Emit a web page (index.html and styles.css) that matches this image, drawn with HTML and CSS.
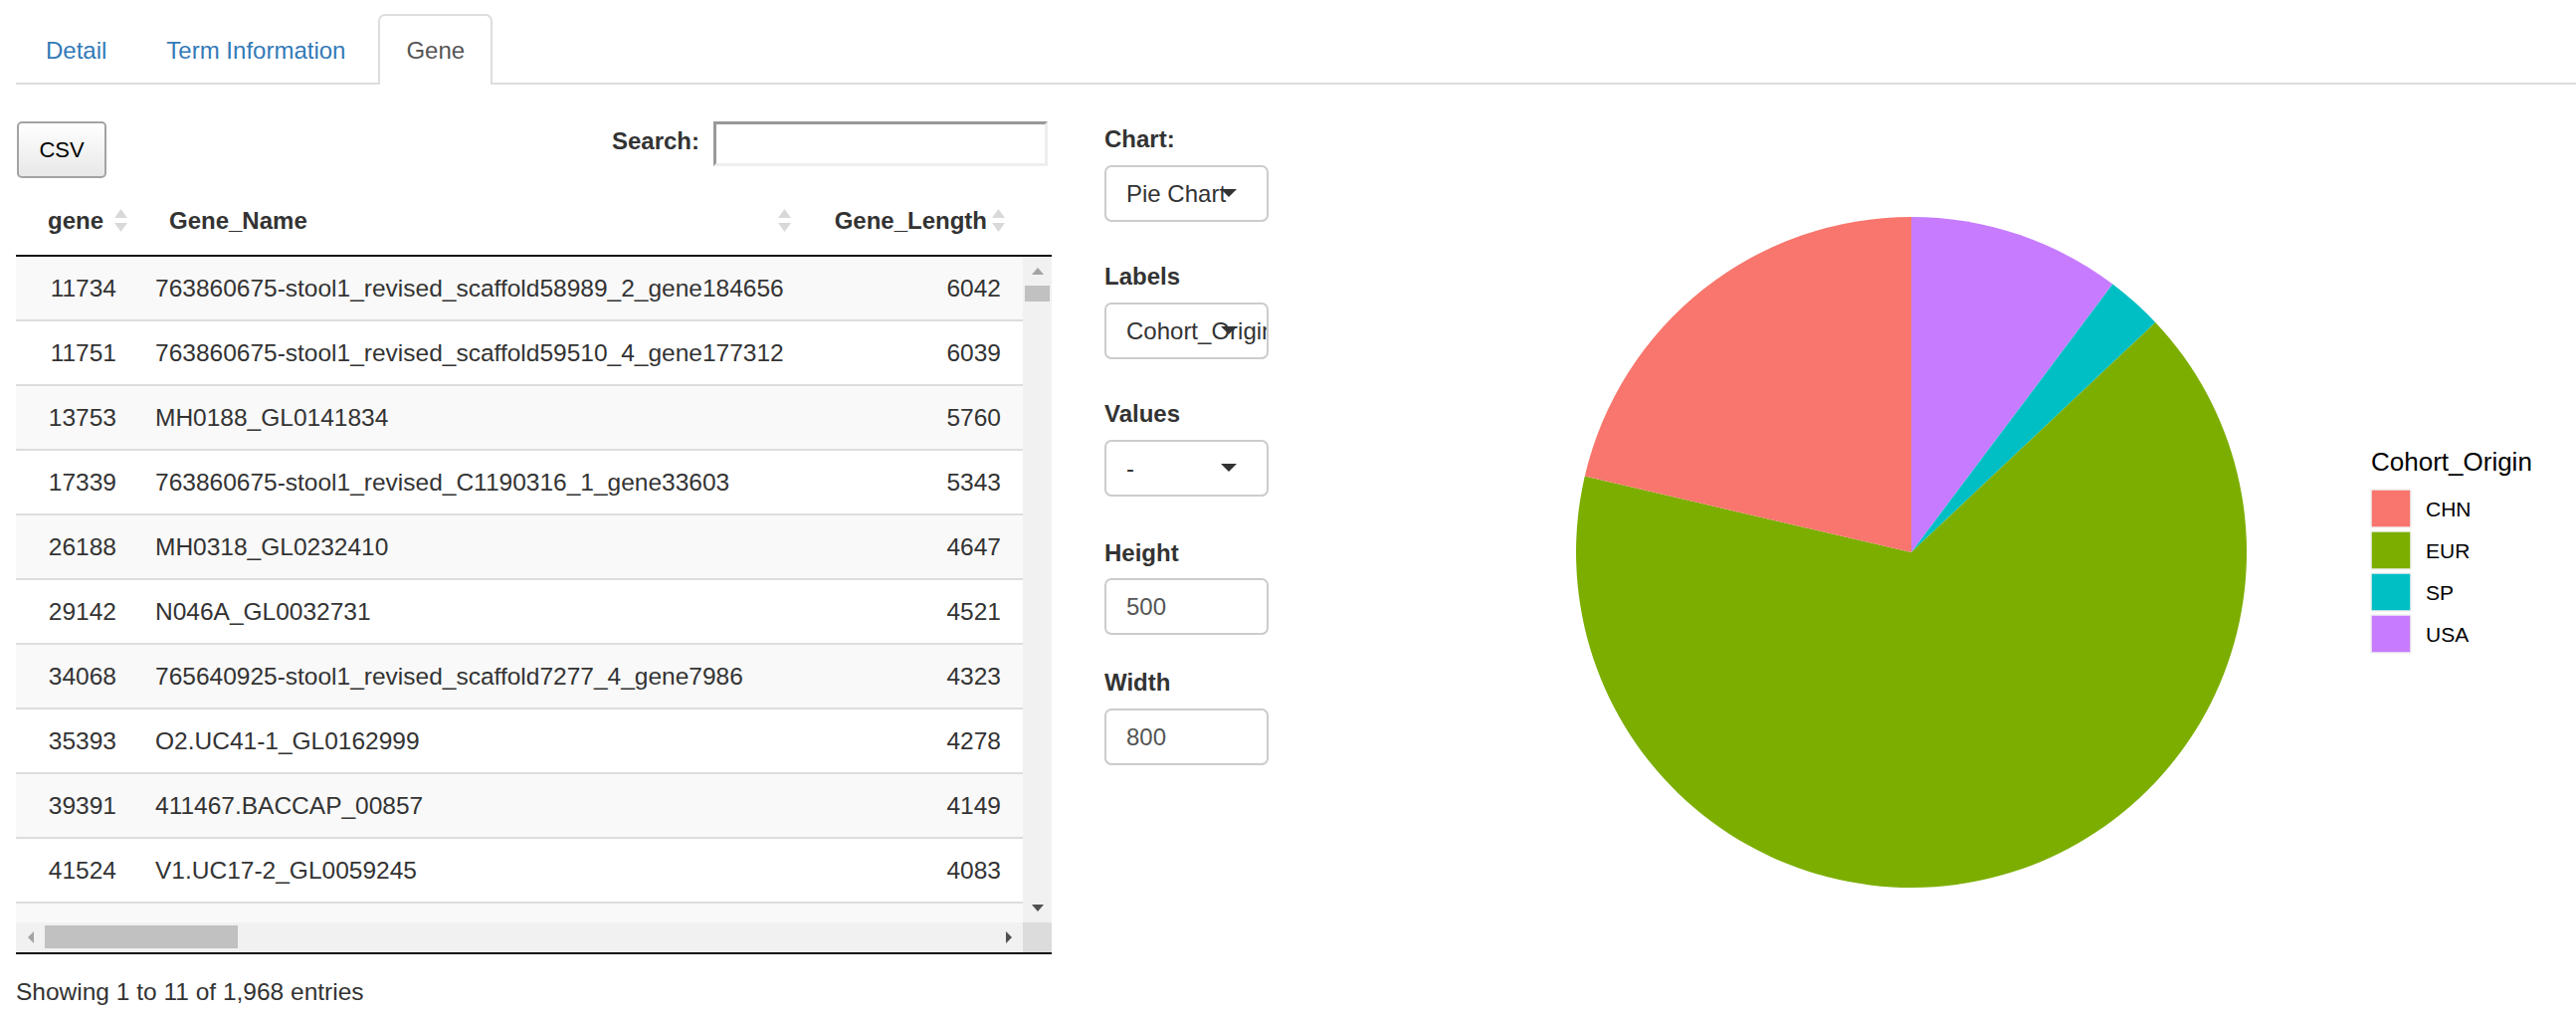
FILE: index.html
```html
<!DOCTYPE html>
<html lang="en">
<head>
<meta charset="utf-8">
<title>Gene</title>
<link rel="stylesheet" href="styles.css">
</head>
<body>
<ul class="tabs">
  <li class="tab"><a>Detail</a></li>
  <li class="tab"><a>Term Information</a></li>
  <li class="tab active"><a>Gene</a></li>
</ul>
<div class="content">
  <div class="table-panel">
    <div class="toolbar">
      <button class="btn-csv">CSV</button>
      <label class="search"><span class="search-label">Search:</span><input class="search-input" type="search"></label>
    </div>
    <div class="thead">
      <div class="th th-gene">gene<svg class="sort" viewBox="0 0 13 23"><polygon points="0,9 6.5,0 13,9"/><polygon points="0,14 13,14 6.5,23"/></svg></div>
      <div class="th th-name">Gene_Name<svg class="sort" viewBox="0 0 13 23"><polygon points="0,9 6.5,0 13,9"/><polygon points="0,14 13,14 6.5,23"/></svg></div>
      <div class="th th-len">Gene_Length<svg class="sort" viewBox="0 0 13 23"><polygon points="0,9 6.5,0 13,9"/><polygon points="0,14 13,14 6.5,23"/></svg></div>
    </div>
    <div class="tbody-wrap">
      <div class="rows">
        <div class="row"><span class="c1">11734</span><span class="c2">763860675-stool1_revised_scaffold58989_2_gene184656</span><span class="c3">6042</span></div>
        <div class="row"><span class="c1">11751</span><span class="c2">763860675-stool1_revised_scaffold59510_4_gene177312</span><span class="c3">6039</span></div>
        <div class="row"><span class="c1">13753</span><span class="c2">MH0188_GL0141834</span><span class="c3">5760</span></div>
        <div class="row"><span class="c1">17339</span><span class="c2">763860675-stool1_revised_C1190316_1_gene33603</span><span class="c3">5343</span></div>
        <div class="row"><span class="c1">26188</span><span class="c2">MH0318_GL0232410</span><span class="c3">4647</span></div>
        <div class="row"><span class="c1">29142</span><span class="c2">N046A_GL0032731</span><span class="c3">4521</span></div>
        <div class="row"><span class="c1">34068</span><span class="c2">765640925-stool1_revised_scaffold7277_4_gene7986</span><span class="c3">4323</span></div>
        <div class="row"><span class="c1">35393</span><span class="c2">O2.UC41-1_GL0162999</span><span class="c3">4278</span></div>
        <div class="row"><span class="c1">39391</span><span class="c2">411467.BACCAP_00857</span><span class="c3">4149</span></div>
        <div class="row"><span class="c1">41524</span><span class="c2">V1.UC17-2_GL0059245</span><span class="c3">4083</span></div>
        <div class="row stub"></div>
      </div>
      <div class="vscroll">
        <div class="sb-btn"><i class="tri-up"></i></div>
        <div class="vthumb"></div>
        <div class="sb-fill"></div>
        <div class="sb-btn"><i class="tri-down"></i></div>
      </div>
      <div class="hscroll">
        <div class="sb-btn-h"><i class="tri-left"></i></div>
        <div class="hthumb"></div>
        <div class="sb-fill"></div>
        <div class="sb-btn-h"><i class="tri-right"></i></div>
      </div>
      <div class="corner"></div>
    </div>
    <div class="info">Showing 1 to 11 of 1,968 entries</div>
  </div>

  <div class="controls">
    <div class="group g-chart">
      <label class="ctl-label">Chart:</label>
      <div class="select"><span>Pie Chart</span><i class="caret"></i></div>
    </div>
    <div class="group g-labels">
      <label class="ctl-label">Labels</label>
      <div class="select"><span>Cohort_Origin</span><i class="caret"></i></div>
    </div>
    <div class="group g-values">
      <label class="ctl-label">Values</label>
      <div class="select"><span>-</span><i class="caret"></i></div>
    </div>
    <div class="group g-height">
      <label class="ctl-label lbl-num">Height</label>
      <div class="num">500</div>
    </div>
    <div class="group g-width">
      <label class="ctl-label">Width</label>
      <div class="num">800</div>
    </div>
  </div>

  <div class="plot">
    <svg class="pie" width="1273" height="900" viewBox="0 0 1273 900">
      <path d="M621,470 L621,133 A337,337 0 0 1 823.3,200.5 Z" fill="#C77CFF"/>
      <path d="M621,470 L823.3,200.5 A337,337 0 0 1 866.3,238.9 Z" fill="#00BFC4"/>
      <path d="M621,470 L866.3,238.9 A337,337 0 1 1 292.8,393.6 Z" fill="#7CAE00"/>
      <path d="M621,470 L292.8,393.6 A337,337 0 0 1 621,133 Z" fill="#F8766D"/>
      <text class="legend-title" x="1083" y="388">Cohort_Origin</text>
      <rect x="1083" y="407" width="40" height="38" fill="#F8766D" stroke="#f2f2f2" stroke-width="1.5"/>
      <rect x="1083" y="449" width="40" height="38" fill="#7CAE00" stroke="#f2f2f2" stroke-width="1.5"/>
      <rect x="1083" y="491" width="40" height="38" fill="#00BFC4" stroke="#f2f2f2" stroke-width="1.5"/>
      <rect x="1083" y="533" width="40" height="38" fill="#C77CFF" stroke="#f2f2f2" stroke-width="1.5"/>
      <text class="legend-label" x="1138" y="434">CHN</text>
      <text class="legend-label" x="1138" y="476">EUR</text>
      <text class="legend-label" x="1138" y="518">SP</text>
      <text class="legend-label" x="1138" y="560">USA</text>
    </svg>
  </div>
</div>
</body>
</html>
```

FILE: styles.css
```css
html, body {
  margin: 0;
  background: #fff;
}
body {
  padding: 0 0 0 16px;
  font-family: "Liberation Sans", Arial, Helvetica, sans-serif;
  font-size: 24.5px;
  line-height: 34px;
  color: #333;
  overflow: hidden;
}

/* Tabs */
.tabs {
  list-style: none;
  margin: 14px 0 0 0;
  padding: 0;
  display: flex;
  border-bottom: 2px solid #ddd;
  font-size: 24px;
}
.tab {
  height: 71px;
  box-sizing: border-box;
  border: 2px solid transparent;
  border-bottom: 0;
  margin-bottom: -2px;
  padding: 0 28px;
  display: flex;
  align-items: center;
  border-radius: 7px 7px 0 0;
  color: #337ab7;
}
.tab.active {
  border-color: #ddd;
  background: #fff;
  color: #555;
  padding: 0 26px;
  margin-left: 3px;
}

/* Layout */
.content {
  display: flex;
  align-items: flex-start;
}
.table-panel {
  width: 1041px;
  padding-top: 37px;
  flex: none;
}

/* Toolbar */
.toolbar {
  display: flex;
  justify-content: space-between;
  align-items: flex-start;
  height: 57px;
}
.btn-csv {
  width: 90px;
  height: 57px;
  margin-left: 1px;
  padding: 0;
  font-family: "Liberation Sans", Arial, sans-serif;
  font-size: 22px;
  color: #000;
  border: 2px solid #a3a3a3;
  border-radius: 5px;
  background: linear-gradient(#ffffff, #e8e8e8);
}
.search {
  display: flex;
  align-items: flex-start;
  margin-right: 4px;
  font-weight: bold;
  font-size: 24px;
}
.search-label {
  margin-top: 3px;
}
.search-input {
  width: 336px;
  height: 45px;
  box-sizing: border-box;
  margin: 0 0 0 14px;
  border-top: 3px solid #999;
  border-left: 3px solid #999;
  border-right: 3px solid #eee;
  border-bottom: 3px solid #eee;
  background: #fff;
  outline: none;
}

/* Header */
.thead {
  display: flex;
  height: 70px;
  box-sizing: border-box;
  margin-top: 9px;
  border-bottom: 2px solid #111;
  font-weight: bold;
  font-size: 24px;
}
.th {
  position: relative;
  box-sizing: border-box;
  padding-top: 17px;
  height: 68px;
  white-space: nowrap;
}
.th-gene {
  width: 126px;
  text-align: right;
  padding-right: 38px;
}
.th-name {
  width: 667px;
  padding-left: 28px;
}
.th-len {
  width: 215px;
  text-align: right;
  padding-right: 32px;
}
.sort {
  position: absolute;
  right: 14px;
  top: 22px;
  width: 13px;
  height: 23px;
  fill: #d9d9d9;
}

/* Body */
.tbody-wrap {
  display: grid;
  grid-template-columns: 1012px 29px;
  grid-template-rows: 669px 30px;
  border-bottom: 2px solid #111;
}
.rows {
  overflow: hidden;
}
.row {
  display: flex;
  align-items: center;
  height: 65px;
  box-sizing: border-box;
  border-bottom: 2px solid #ddd;
  white-space: nowrap;
}
.row:nth-child(odd) {
  background: #f9f9f9;
}
.row.stub {
  height: 19px;
  border-bottom: 0;
}
.c1 {
  width: 126px;
  box-sizing: border-box;
  text-align: right;
  padding-right: 25px;
}
.c2 {
  width: 667px;
  box-sizing: border-box;
  padding-left: 14px;
}
.c3 {
  width: 215px;
  box-sizing: border-box;
  text-align: right;
  padding-right: 18px;
}

/* Scrollbars */
.vscroll {
  background: #f1f1f1;
  display: flex;
  flex-direction: column;
}
.sb-btn {
  height: 29px;
  display: flex;
  align-items: center;
  justify-content: center;
  flex: none;
}
.vthumb {
  height: 16px;
  margin: 0 2px;
  background: #c1c1c1;
  flex: none;
}
.sb-fill {
  flex: 1;
}
.hscroll {
  background: #f1f1f1;
  display: flex;
}
.sb-btn-h {
  width: 29px;
  display: flex;
  align-items: center;
  justify-content: center;
  flex: none;
}
.hthumb {
  width: 194px;
  margin: 3px 0 4px;
  background: #c1c1c1;
  flex: none;
}
.corner {
  background: #dcdcdc;
}
.tri-up {
  width: 0;
  height: 0;
  border-left: 6px solid transparent;
  border-right: 6px solid transparent;
  border-bottom: 7px solid #a3a3a3;
}
.tri-down {
  width: 0;
  height: 0;
  border-left: 6px solid transparent;
  border-right: 6px solid transparent;
  border-top: 7px solid #505050;
}
.tri-left {
  width: 0;
  height: 0;
  border-top: 6px solid transparent;
  border-bottom: 6px solid transparent;
  border-right: 6px solid #a3a3a3;
}
.tri-right {
  width: 0;
  height: 0;
  border-top: 6px solid transparent;
  border-bottom: 6px solid transparent;
  border-left: 6px solid #505050;
}

.info {
  margin-top: 21px;
}

/* Controls */
.controls {
  width: 165px;
  margin-left: 53px;
  padding-top: 38px;
  flex: none;
  font-size: 24px;
}
.ctl-label {
  display: block;
  font-weight: bold;
  margin-bottom: 9px;
}
.lbl-num {
  margin-bottom: 8px;
}
.g-chart, .g-labels {
  margin-bottom: 38px;
}
.g-values {
  margin-bottom: 40px;
}
.g-height {
  margin-bottom: 31px;
}
.select, .num {
  position: relative;
  height: 57px;
  box-sizing: border-box;
  border: 2px solid #ccc;
  border-radius: 7px;
  padding-left: 20px;
  line-height: 53px;
  white-space: nowrap;
  overflow: hidden;
  background: #fff;
}
.select {
  color: #333;
}
.num {
  color: #555;
}
.caret {
  position: absolute;
  right: 30px;
  top: 22px;
  width: 0;
  height: 0;
  border-left: 8px solid transparent;
  border-right: 8px solid transparent;
  border-top: 8px solid #333;
}

/* Plot */
.plot {
  margin-left: 25px;
  flex: none;
}
.pie {
  display: block;
}
.legend-title {
  font-family: "Liberation Sans", Arial, sans-serif;
  font-size: 26px;
  fill: #000;
}
.legend-label {
  font-family: "Liberation Sans", Arial, sans-serif;
  font-size: 21px;
  fill: #000;
}
```
